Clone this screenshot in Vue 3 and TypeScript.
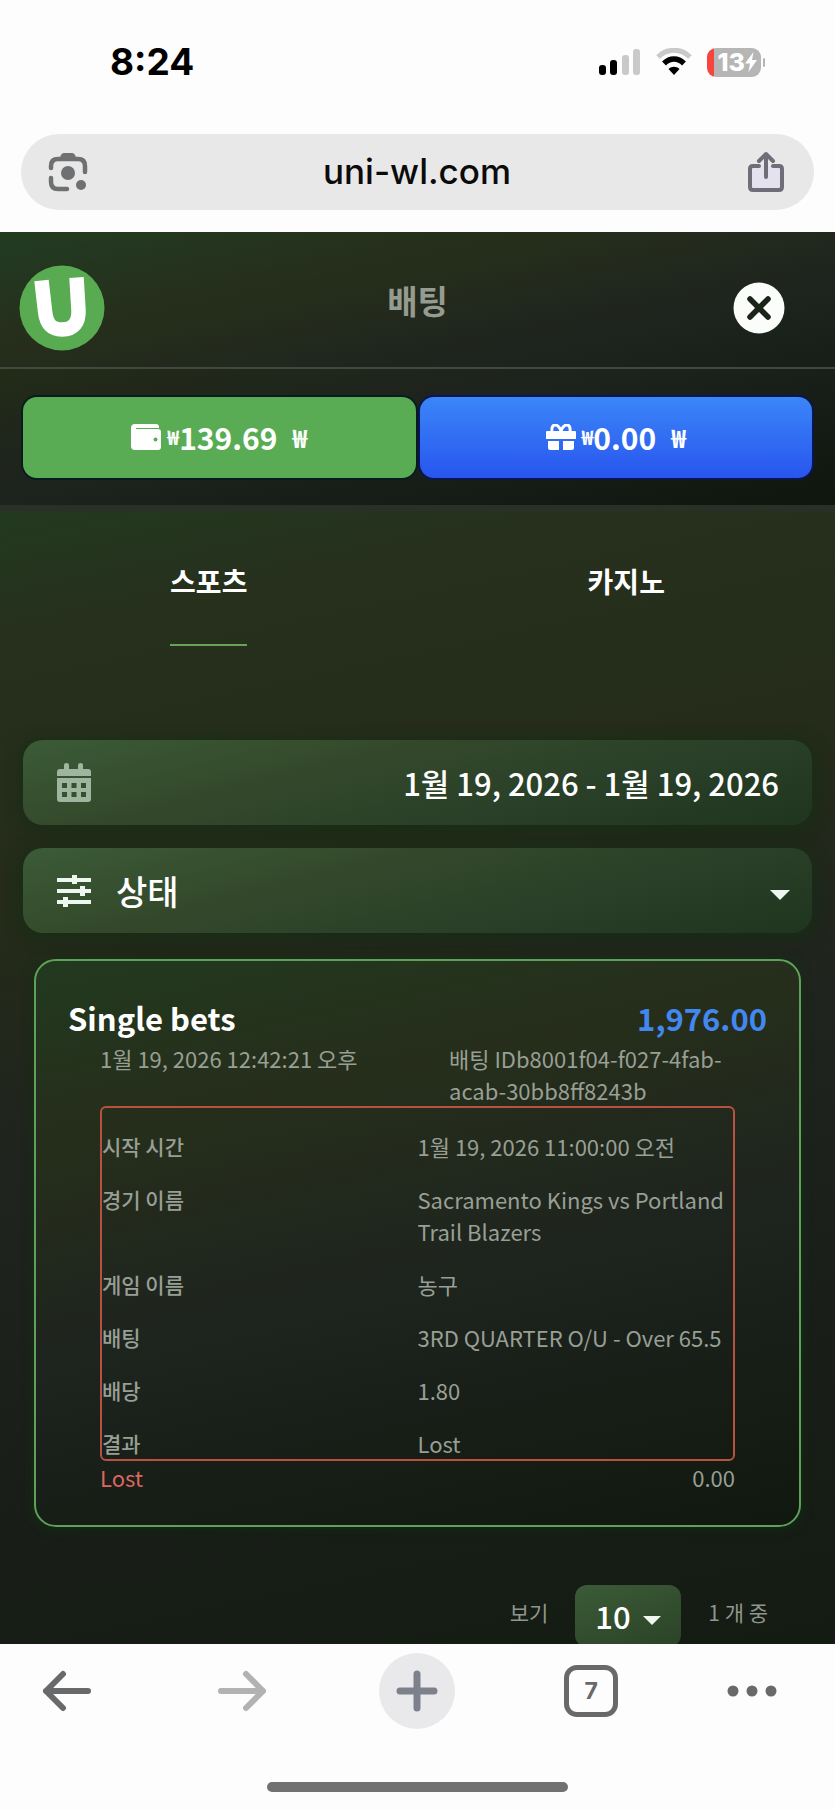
<script setup lang="ts">
import { ref } from 'vue'

interface Row {
  label: string
  value: string
}

const rows: Row[] = [
  { label: '시작 시간', value: '1월 19, 2026 11:00:00 오전' },
  { label: '경기 이름', value: 'Sacramento Kings vs Portland Trail Blazers' },
  { label: '게임 이름', value: '농구' },
  { label: '배팅', value: '3RD QUARTER O/U - Over 65.5' },
  { label: '배당', value: '1.80' },
  { label: '결과', value: 'Lost' },
]

const tabs = ['스포츠', '카지노']
const activeTab = ref('스포츠')
const dateRange = ref('1월 19, 2026 - 1월 19, 2026')
const status = ref('상태')
const pageSize = ref('10')
</script>

<template>
  <div class="phone">
    <div class="status-bar">
      <span class="clock">8:24</span>
      <div class="indicators">
        <svg width="42" height="28" viewBox="0 0 42 28" aria-hidden="true">
          <rect x="0" y="17" width="7" height="10" rx="3" fill="#000" />
          <rect x="11" y="12" width="7" height="15" rx="3" fill="#000" />
          <rect x="23" y="7" width="7" height="20" rx="3" fill="#c9c9c9" />
          <rect x="34" y="1" width="7" height="26" rx="3" fill="#c9c9c9" />
        </svg>
        <svg width="36" height="28" viewBox="0 0 36 28" fill="none" aria-hidden="true">
          <path d="M2 9C11 0 25 0 34 9" stroke="#c9c9c9" stroke-width="5" />
          <path d="M8 15.500C14 9.500 22 9.500 28 15.500" stroke="#000" stroke-width="5.500" />
          <path d="M12.500 21C15.500 18 20.500 18 23.500 21L18 27Z" fill="#000" />
        </svg>
        <div class="battery">
          <span class="level">13</span>
          <svg width="12" height="20" viewBox="0 0 12 20" aria-hidden="true">
            <path d="M8.500 0L0 11.500H5L3.500 20L12 8H7Z" fill="#fff" />
          </svg>
        </div>
      </div>
    </div>

    <div class="address">
      <button class="plain" type="button" aria-label="Lens">
        <svg width="42" height="42" viewBox="0 0 42 42" fill="none" stroke="#6f7072" stroke-width="4.500" stroke-linecap="round">
          <path d="M4 17V15Q4 8 11 8H31Q38 8 38 15V21" />
          <path d="M4 27V31Q4 38 11 38H20" />
          <path d="M12 9L14 4Q15 2 17 2H25Q27 2 28 4L30 9Z" fill="#6f7072" stroke="none" />
          <circle cx="21" cy="22" r="7" fill="#6f7072" stroke="none" />
          <circle cx="34" cy="34" r="5" fill="#6f7072" stroke="none" />
        </svg>
      </button>
      <span class="url">uni-wl.com</span>
      <button class="plain" type="button" aria-label="Share">
        <svg width="42" height="42" viewBox="0 0 42 42" fill="none" stroke="#6e6d78" stroke-width="4" stroke-linecap="round" stroke-linejoin="round">
          <path d="M14 15H8Q5 15 5 18V36Q5 39 8 39H34Q37 39 37 36V18Q37 15 34 15H28" fill="#e3e2ee" />
          <path d="M21 26V4M14 10L21 3L28 10" />
        </svg>
      </button>
    </div>

    <header class="site-head">
      <a class="logo" href="#" aria-label="U">
        <svg width="86" height="86" viewBox="0 0 86 86">
          <circle cx="43" cy="43" r="42.500" fill="#59ab52" />
          <path d="M22.500 15.500L26 46C27.500 60 33 64.500 43 64.500C55 64.500 60 57 59.500 45L57.500 12.500" fill="none" stroke="#fff" stroke-width="14.500" />
        </svg>
      </a>
      <h1>배팅</h1>
      <button class="close plain" type="button" aria-label="Close">
        <svg width="52" height="52" viewBox="0 0 52 52">
          <circle cx="26" cy="26" r="25.500" fill="#fbfdfa" />
          <path d="M17 17L35 35M35 17L17 35" stroke="#1b2419" stroke-width="5.500" stroke-linecap="round" />
        </svg>
      </button>
    </header>

    <div class="wallets">
      <button class="wallet cash" type="button">
        <svg width="30" height="26" viewBox="0 0 30 26" aria-hidden="true">
          <path d="M4 0H25Q28 0 28 3V4H5V5H27Q30 5 30 8V23Q30 26 27 26H4Q0 26 0 22V4Q0 0 4 0Z" fill="#fff" />
          <circle cx="24.500" cy="15.500" r="2" fill="#59ab52" />
        </svg>
        <span class="sign">₩</span><span>139.69</span><small>₩</small>
      </button>
      <button class="wallet bonus" type="button">
        <svg width="30" height="26" viewBox="0 0 30 26" aria-hidden="true">
          <path d="M15 7C12-1 5-1 6 7M15 7C18-1 25-1 24 7" fill="none" stroke="#fff" stroke-width="3" />
          <path d="M1 7H29Q30 7 30 8V15H0V8Q0 7 1 7ZM2 17H13V26H4Q2 26 2 24ZM17 17H28V24Q28 26 26 26H17Z" fill="#fff" />
        </svg>
        <span class="sign">₩</span><span>0.00</span><small>₩</small>
      </button>
    </div>

    <main class="content">
      <nav class="tabs">
        <button
          v-for="tab in tabs"
          :key="tab"
          class="tab plain"
          :class="{ active: tab === activeTab }"
          type="button"
          @click="activeTab = tab"
        >
          <span>{{ tab }}</span>
        </button>
      </nav>

      <form class="filters" @submit.prevent>
        <label class="field">
          <svg width="34" height="40" viewBox="0 0 34 40" aria-label="날짜">
            <path d="M7 6V2Q7 0 9.500 0T12 2V6H21V2Q21 0 23.500 0T26 2V6H31Q34 6 34 9V13H0V9Q0 6 3 6Z" fill="#9fb5a0" />
            <path d="M0 15H34V36Q34 39 31 39H3Q0 39 0 36Z" fill="#9fb5a0" />
            <path d="M5 20h5v5h-5zM14.500 20h5v5h-5zM24 20h5v5h-5zM5 29h5v5h-5zM14.500 29h5v5h-5zM24 29h5v5h-5z" fill="#34502f" />
          </svg>
          <input v-model="dateRange" class="date" type="text" readonly />
        </label>
        <label class="field">
          <svg width="34" height="32" viewBox="0 0 34 32" fill="#edf6ef" aria-label="필터">
            <path d="M0 3H15V0H20V3H34V7H20V9H15V7H0ZM0 14H23V11H28V14H34V18H28V21H23V18H0ZM0 25H6V22H11V25H34V29H11V32H6V29H0Z" />
          </svg>
          <select v-model="status" class="status">
            <option>상태</option>
          </select>
          <svg class="caret" width="20" height="10" viewBox="0 0 20 10" aria-hidden="true">
            <path d="M0 0H20L10 10Z" fill="#edf6ef" />
          </svg>
        </label>
      </form>

      <article class="bet">
        <div class="bet-head">
          <h2>Single bets</h2>
          <strong>1,976.00</strong>
        </div>
        <div class="bet-body">
          <div class="meta">
            <time>1월 19, 2026 12:42:21 오후</time>
            <span>배팅 IDb8001f04-f027-4fab-acab-30bb8ff8243b</span>
          </div>
          <dl class="details">
            <div v-for="row in rows" :key="row.label" class="row">
              <dt>{{ row.label }}</dt>
              <dd>{{ row.value }}</dd>
            </div>
          </dl>
          <div class="result">
            <span class="lost">Lost</span>
            <span>0.00</span>
          </div>
        </div>
      </article>

      <div class="pager">
        <label for="page-size">보기</label>
        <div class="size-box">
          <select id="page-size" v-model="pageSize">
            <option>10</option>
          </select>
          <svg class="caret" width="18" height="9" viewBox="0 0 18 9" aria-hidden="true">
            <path d="M0 0H18L9 9Z" fill="#edf6ef" />
          </svg>
        </div>
        <span>1 개 중</span>
      </div>
    </main>

    <footer class="browser">
      <div class="toolbar">
        <button class="plain" type="button" aria-label="Back">
          <svg width="50" height="42" viewBox="0 0 50 42" fill="none" stroke="#68696b" stroke-width="6" stroke-linecap="round" stroke-linejoin="round">
            <path d="M46 21H4M21 4L4 21L21 38" />
          </svg>
        </button>
        <button class="plain" type="button" aria-label="Forward">
          <svg width="50" height="42" viewBox="0 0 50 42" fill="none" stroke="#b2b2b2" stroke-width="6" stroke-linecap="round" stroke-linejoin="round">
            <path d="M4 21H46M29 4L46 21L29 38" />
          </svg>
        </button>
        <button class="plain add" type="button" aria-label="New tab">
          <svg width="42" height="42" viewBox="0 0 42 42" fill="none" stroke="#7d818b" stroke-width="7" stroke-linecap="round">
            <path d="M21 4V38M4 21H38" />
          </svg>
        </button>
        <button class="plain" type="button" aria-label="Tabs"><span class="count">7</span></button>
        <button class="plain more" type="button" aria-label="More">
          <svg width="50" height="12" viewBox="0 0 50 12" fill="#68696b">
            <circle cx="6" cy="6" r="5.500" /><circle cx="25" cy="6" r="5.500" /><circle cx="44" cy="6" r="5.500" />
          </svg>
        </button>
      </div>
      <div class="home-bar"></div>
    </footer>
  </div>
</template>

<style>
body {
  margin: 0;
  background: #fdfdfd;
}
</style>

<style scoped>
* {
  box-sizing: border-box;
}

.phone {
  display: flex;
  flex-direction: column;
  height: 100vh;
  background: #fdfdfd;
  color: #fff;
  font-family: 'Noto Sans CJK KR', sans-serif;
}

button,
input,
select {
  margin: 0;
  padding: 0;
  border: 0;
  background: none;
  color: inherit;
  font: inherit;
}

select {
  appearance: none;
}

svg {
  display: block;
  flex: none;
}

.plain {
  display: flex;
  align-items: center;
  justify-content: center;
}

.status-bar {
  display: flex;
  justify-content: space-between;
  align-items: center;
  flex: none;
  height: 124px;
  padding: 0 74px 0 110px;
  color: #000;
}

.clock {
  font: 700 37px/40px Inter, sans-serif;
}

.indicators {
  display: flex;
  align-items: center;
  gap: 15px;
}

.battery {
  position: relative;
  display: flex;
  align-items: center;
  justify-content: flex-end;
  width: 54px;
  height: 29px;
  padding-right: 4px;
  border-radius: 9px;
  background: linear-gradient(90deg, #f5453c 7px, #b6b6b6 7px);
  color: #fff;
  font: 800 25px/29px Inter, sans-serif;
}

.battery::after {
  content: '';
  position: absolute;
  right: -4px;
  top: 10px;
  width: 2px;
  height: 9px;
  border-radius: 1px;
  background: #b6b6b6;
}

.address {
  display: flex;
  align-items: center;
  justify-content: space-between;
  flex: none;
  height: 76px;
  margin: 10px 21px 22px;
  padding: 0 27px 0 26px;
  border-radius: 38px;
  background: #e8e8e8;
}

.url {
  padding-bottom: 2px;
  color: #0b0b0b;
  font: 500 35px/44px Inter, sans-serif;
}

.site-head {
  display: grid;
  grid-template-columns: 1fr auto 1fr;
  align-items: center;
  flex: none;
  height: 137px;
  padding: 17px 50px 0 19px;
  border-bottom: 2px solid #41493e;
  background: linear-gradient(168deg, #223b22 0%, #262e1b 38%, #1e241e 72%, #171d17 100%);
}

.site-head h1 {
  margin: 0 0 16px 31px;
  color: #959b90;
  font-size: 33px;
  font-weight: 700;
  line-height: 44px;
}

.logo {
  justify-self: start;
}

.close {
  justify-self: end;
}

.wallets {
  display: grid;
  grid-template-columns: 1fr 1fr;
  gap: 4px;
  flex: none;
  padding: 28px 23px 27px;
  background: linear-gradient(168deg, #232b18 0%, #1d231d 40%, #0e160e 100%);
}

.wallet {
  display: flex;
  align-items: center;
  justify-content: center;
  height: 81px;
  padding-bottom: 2px;
  border-radius: 14px;
  font-size: 30px;
  font-weight: 700;
  line-height: 40px;
  box-shadow: 0 0 0 2px #081b20;
}

.cash {
  background: #5aac54;
}

.bonus {
  background: linear-gradient(#3b86f8, #2855ee);
  box-shadow: 0 0 0 2px #0a1650;
}

.sign {
  margin-left: 6px;
  font-size: 20px;
}

.wallet small {
  margin-left: 15px;
  font-size: 25px;
}

.content {
  flex: 1;
  min-height: 0;
  overflow-y: auto;
  scrollbar-width: none;
  background: linear-gradient(168deg, #22391f 0%, #272f1d 12%, #242b19 32%, #1f241e 50%, #191f18 75%, #141b13 100%);
}

.tabs {
  display: grid;
  grid-template-columns: 1fr 1fr;
  border-top: 6px solid #2a2f27;
  margin-bottom: 94px;
}

.tab span {
  padding: 48px 0 41px;
  border-bottom: 2px solid transparent;
  font-size: 28px;
  font-weight: 700;
  line-height: 44px;
}

.tab.active span {
  border-color: #67a15a;
}

.filters {
  display: grid;
  gap: 23px;
  margin: 0 23px 26px;
}

.field {
  display: flex;
  align-items: center;
  height: 85px;
  padding: 0 22px 0 34px;
  border-radius: 20px;
  background: linear-gradient(166deg, #3b5b37 0%, #34492b 35%, #2a4028 65%, #20351d 100%);
  box-shadow: 0 2px 14px 4px rgba(18, 46, 20, 0.6);
}

.date {
  flex: 1;
  min-width: 0;
  padding: 0 11px 0 0;
  font-size: 31px;
  font-weight: 500;
  line-height: 44px;
  text-align: right;
}

.status {
  flex: 1;
  min-width: 0;
  margin-left: 25px;
  font-size: 34px;
  font-weight: 500;
  line-height: 48px;
}

.caret {
  margin-top: 8px;
}

.bet {
  margin: 0 34px 58px;
  padding: 33px 32px 32px;
  border: 2px solid #5fa05b;
  border-radius: 22px;
  background: linear-gradient(168deg, #22391f 0%, #262e1b 25%, #1e241e 55%, #10180f 100%);
  box-shadow: 0 0 12px rgba(16, 50, 16, 0.8);
}

.bet-head {
  display: flex;
  justify-content: space-between;
  font-size: 31px;
  line-height: 48px;
}

.bet-head h2 {
  margin: 0;
  font-size: 31px;
  font-weight: 700;
}

.bet-head strong {
  color: #4387f0;
}

.bet-body {
  padding: 0 32px;
  color: #989f95;
  font-size: 22px;
  line-height: 32px;
}

.meta {
  display: grid;
  grid-template-columns: 349px 1fr;
}

.details {
  display: grid;
  gap: 21px;
  margin: 0;
  padding-top: 22px;
  border: 2px solid #b8513f;
  border-radius: 6px;
}

.row {
  display: grid;
  grid-template-columns: 1fr 1fr;
}

.row dt {
  font-size: 21px;
  font-weight: 500;
}

.row dd {
  margin: 0;
}

.result {
  display: flex;
  justify-content: space-between;
}

.lost {
  color: #dd6660;
}

.pager {
  display: flex;
  align-items: flex-start;
  justify-content: flex-end;
  gap: 27px;
  padding-right: 67px;
  color: #8f968c;
  font-size: 21px;
  line-height: 54px;
}

.size-box {
  display: flex;
  align-items: center;
  height: 62px;
  padding: 0 20px;
  border-radius: 12px;
  background: linear-gradient(160deg, #3b5b37, #2b4227);
}

.size-box select {
  width: 48px;
  color: #fff;
  font-size: 31px;
  font-weight: 500;
  line-height: 44px;
}

.browser {
  flex: none;
  padding: 9px 0 18px;
}

.toolbar {
  display: flex;
  align-items: center;
  justify-content: space-between;
  padding: 0 59px 0 29px;
}

.toolbar button {
  width: 76px;
  height: 76px;
}

.toolbar .more {
  width: 48px;
}

.toolbar .add {
  border-radius: 50%;
  background: #e9e9eb;
}

.count {
  width: 54px;
  height: 52px;
  border: 5px solid #68696b;
  border-radius: 13px;
  color: #68696b;
  font: 700 23px/42px Inter, sans-serif;
}

.home-bar {
  width: 36%;
  height: 10px;
  margin: 53px auto 0;
  border-radius: 5px;
  background: #717171;
}
</style>
